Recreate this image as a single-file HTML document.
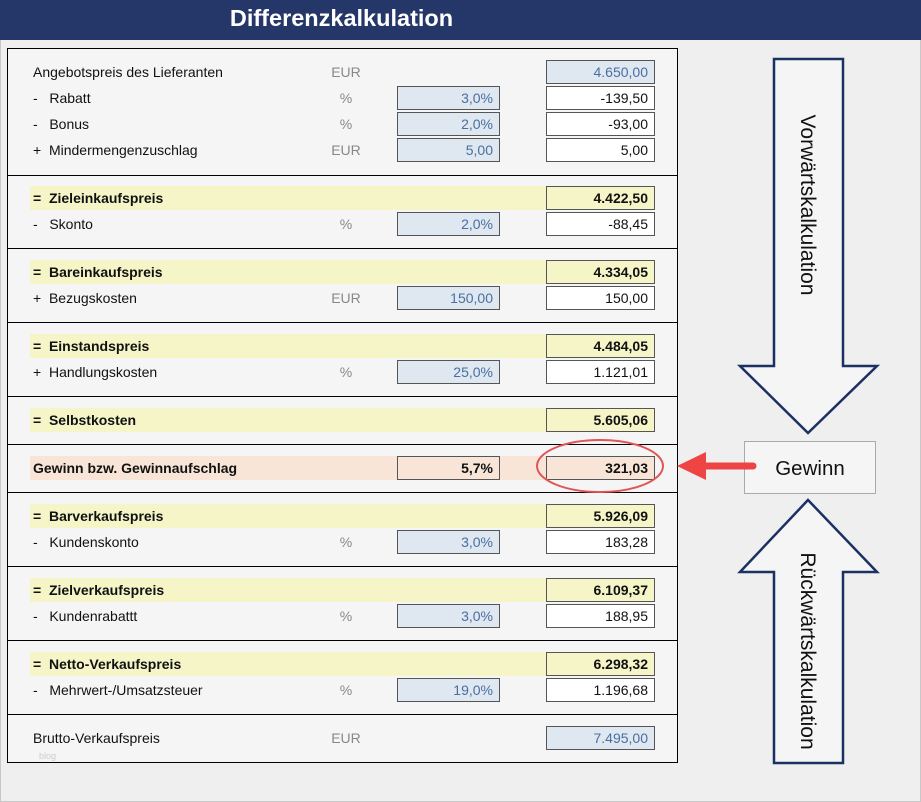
<!DOCTYPE html>
<html><head><meta charset="utf-8"><style>
body{margin:0;width:921px;height:802px;background:#efefef;font-family:"Liberation Sans",sans-serif;position:relative;overflow:hidden}
.frame{position:absolute;left:0;top:0;width:919px;height:800px;border:1px solid #c8c8c8}
.hdr{position:absolute;left:0;top:0;width:921px;height:40px;background:#253668}
.hdr span{position:absolute;left:0;width:683px;text-align:center;top:5px;color:#fff;font-weight:bold;font-size:23.5px}
.box{position:absolute;left:7px;top:48px;width:669px;height:713px;border:1px solid #000;background:#f5f5f5}
.sep{position:absolute;left:7px;width:671px;height:1px;background:#000}
.t{position:absolute;font-size:14px;color:#111;white-space:nowrap}
.u{position:absolute;font-size:14px;color:#888;width:60px;text-align:center;left:316px}
.c{position:absolute;height:24px;border:1px solid #555;box-sizing:border-box;text-align:right;padding-right:6px;font-size:14px;line-height:23px}
.in{left:397px;width:103px;background:#dfe7f0;color:#4a6fa0}
.rs{left:546px;width:109px;background:#fff;color:#111}
.bl{background:#dfe7f0;color:#4a6fa0}
.y{background:#f5f5c8;font-weight:bold}
.band{position:absolute;left:30px;width:516px;height:24px}
b{font-weight:bold}
</style></head><body>
<div class="frame"></div>
<div class="hdr"><span>Differenzkalkulation</span></div>
<div class="box"></div>
<div class="sep" style="top:175px"></div>
<div class="sep" style="top:248px"></div>
<div class="sep" style="top:322px"></div>
<div class="sep" style="top:396px"></div>
<div class="sep" style="top:444px"></div>
<div class="sep" style="top:492px"></div>
<div class="sep" style="top:566px"></div>
<div class="sep" style="top:640px"></div>
<div class="sep" style="top:714px"></div>

<div class="band" style="top:186px;background:#f5f5c8"></div>
<div class="band" style="top:260px;background:#f5f5c8"></div>
<div class="band" style="top:334px;background:#f5f5c8"></div>
<div class="band" style="top:408px;background:#f5f5c8"></div>
<div class="band" style="top:456px;background:#f8e5d8"></div>
<div class="band" style="top:504px;background:#f5f5c8"></div>
<div class="band" style="top:578px;background:#f5f5c8"></div>
<div class="band" style="top:652px;background:#f5f5c8"></div>

<div class="t" style="left:33px;top:64px">Angebotspreis des Lieferanten</div><div class="u" style="top:64px">EUR</div><div class="c rs bl" style="top:60px">4.650,00</div>
<div class="t" style="left:33px;top:90px">-&nbsp;&nbsp; Rabatt</div><div class="u" style="top:90px">%</div><div class="c in" style="top:86px">3,0%</div><div class="c rs" style="top:86px">-139,50</div>
<div class="t" style="left:33px;top:116px">-&nbsp;&nbsp; Bonus</div><div class="u" style="top:116px">%</div><div class="c in" style="top:112px">2,0%</div><div class="c rs" style="top:112px">-93,00</div>
<div class="t" style="left:33px;top:142px">+&nbsp; Mindermengenzuschlag</div><div class="u" style="top:142px">EUR</div><div class="c in" style="top:138px">5,00</div><div class="c rs" style="top:138px">5,00</div>

<div class="t" style="left:33px;top:190px"><b>=&nbsp; Zieleinkaufspreis</b></div><div class="c rs y" style="top:186px">4.422,50</div>
<div class="t" style="left:33px;top:216px">-&nbsp;&nbsp; Skonto</div><div class="u" style="top:216px">%</div><div class="c in" style="top:212px">2,0%</div><div class="c rs" style="top:212px">-88,45</div>

<div class="t" style="left:33px;top:264px"><b>=&nbsp; Bareinkaufspreis</b></div><div class="c rs y" style="top:260px">4.334,05</div>
<div class="t" style="left:33px;top:290px">+&nbsp; Bezugskosten</div><div class="u" style="top:290px">EUR</div><div class="c in" style="top:286px">150,00</div><div class="c rs" style="top:286px">150,00</div>

<div class="t" style="left:33px;top:338px"><b>=&nbsp; Einstandspreis</b></div><div class="c rs y" style="top:334px">4.484,05</div>
<div class="t" style="left:33px;top:364px">+&nbsp; Handlungskosten</div><div class="u" style="top:364px">%</div><div class="c in" style="top:360px">25,0%</div><div class="c rs" style="top:360px">1.121,01</div>

<div class="t" style="left:33px;top:412px"><b>=&nbsp; Selbstkosten</b></div><div class="c rs y" style="top:408px">5.605,06</div>

<div class="t" style="left:33px;top:460px"><b>Gewinn bzw. Gewinnaufschlag</b></div><div class="c in" style="top:456px;background:#f8e5d8;color:#111;font-weight:bold">5,7%</div><div class="c rs" style="top:456px;background:#f8e5d8;font-weight:bold">321,03</div>

<div class="t" style="left:33px;top:508px"><b>=&nbsp; Barverkaufspreis</b></div><div class="c rs y" style="top:504px">5.926,09</div>
<div class="t" style="left:33px;top:534px">-&nbsp;&nbsp; Kundenskonto</div><div class="u" style="top:534px">%</div><div class="c in" style="top:530px">3,0%</div><div class="c rs" style="top:530px">183,28</div>

<div class="t" style="left:33px;top:582px"><b>=&nbsp; Zielverkaufspreis</b></div><div class="c rs y" style="top:578px">6.109,37</div>
<div class="t" style="left:33px;top:608px">-&nbsp;&nbsp; Kundenrabattt</div><div class="u" style="top:608px">%</div><div class="c in" style="top:604px">3,0%</div><div class="c rs" style="top:604px">188,95</div>

<div class="t" style="left:33px;top:656px"><b>=&nbsp; Netto-Verkaufspreis</b></div><div class="c rs y" style="top:652px">6.298,32</div>
<div class="t" style="left:33px;top:682px">-&nbsp;&nbsp; Mehrwert-/Umsatzsteuer</div><div class="u" style="top:682px">%</div><div class="c in" style="top:678px">19,0%</div><div class="c rs" style="top:678px">1.196,68</div>

<div class="t" style="left:33px;top:730px">Brutto-Verkaufspreis</div><div class="u" style="top:730px">EUR</div><div class="c rs bl" style="top:726px">7.495,00</div>
<div class="t" style="left:39px;top:751px;font-size:9px;color:#ccc">blog</div>

<svg width="921" height="802" style="position:absolute;left:0;top:0">
<polygon points="774,59 843,59 843,366 877,366 808,433 740,366 774,366" fill="#f5f5f5" stroke="#1b3163" stroke-width="2.5"/>
<polygon points="808,500 877,572 843,572 843,763 774,763 774,572 740,572" fill="#f5f5f5" stroke="#1b3163" stroke-width="2.5"/>
<text transform="translate(801,205) rotate(90)" text-anchor="middle" font-family="Liberation Sans" font-size="21" fill="#111">Vorwärtskalkulation</text>
<text transform="translate(801,651) rotate(90)" text-anchor="middle" font-family="Liberation Sans" font-size="21" fill="#111">Rückwärtskalkulation</text>
<rect x="744.5" y="441.5" width="131" height="52" fill="#f5f5f5" stroke="#aaa"/>
<text x="810" y="475" text-anchor="middle" font-family="Liberation Sans" font-size="20.5" fill="#111">Gewinn</text>
<line x1="700" y1="466" x2="753" y2="466" stroke="#ef4444" stroke-width="7" stroke-linecap="round"/>
<polygon points="677,466 706,452 706,480" fill="#ef4444"/>
<ellipse cx="600" cy="466" rx="63" ry="26" fill="none" stroke="#e05555" stroke-width="2"/>
</svg>
</body></html>
